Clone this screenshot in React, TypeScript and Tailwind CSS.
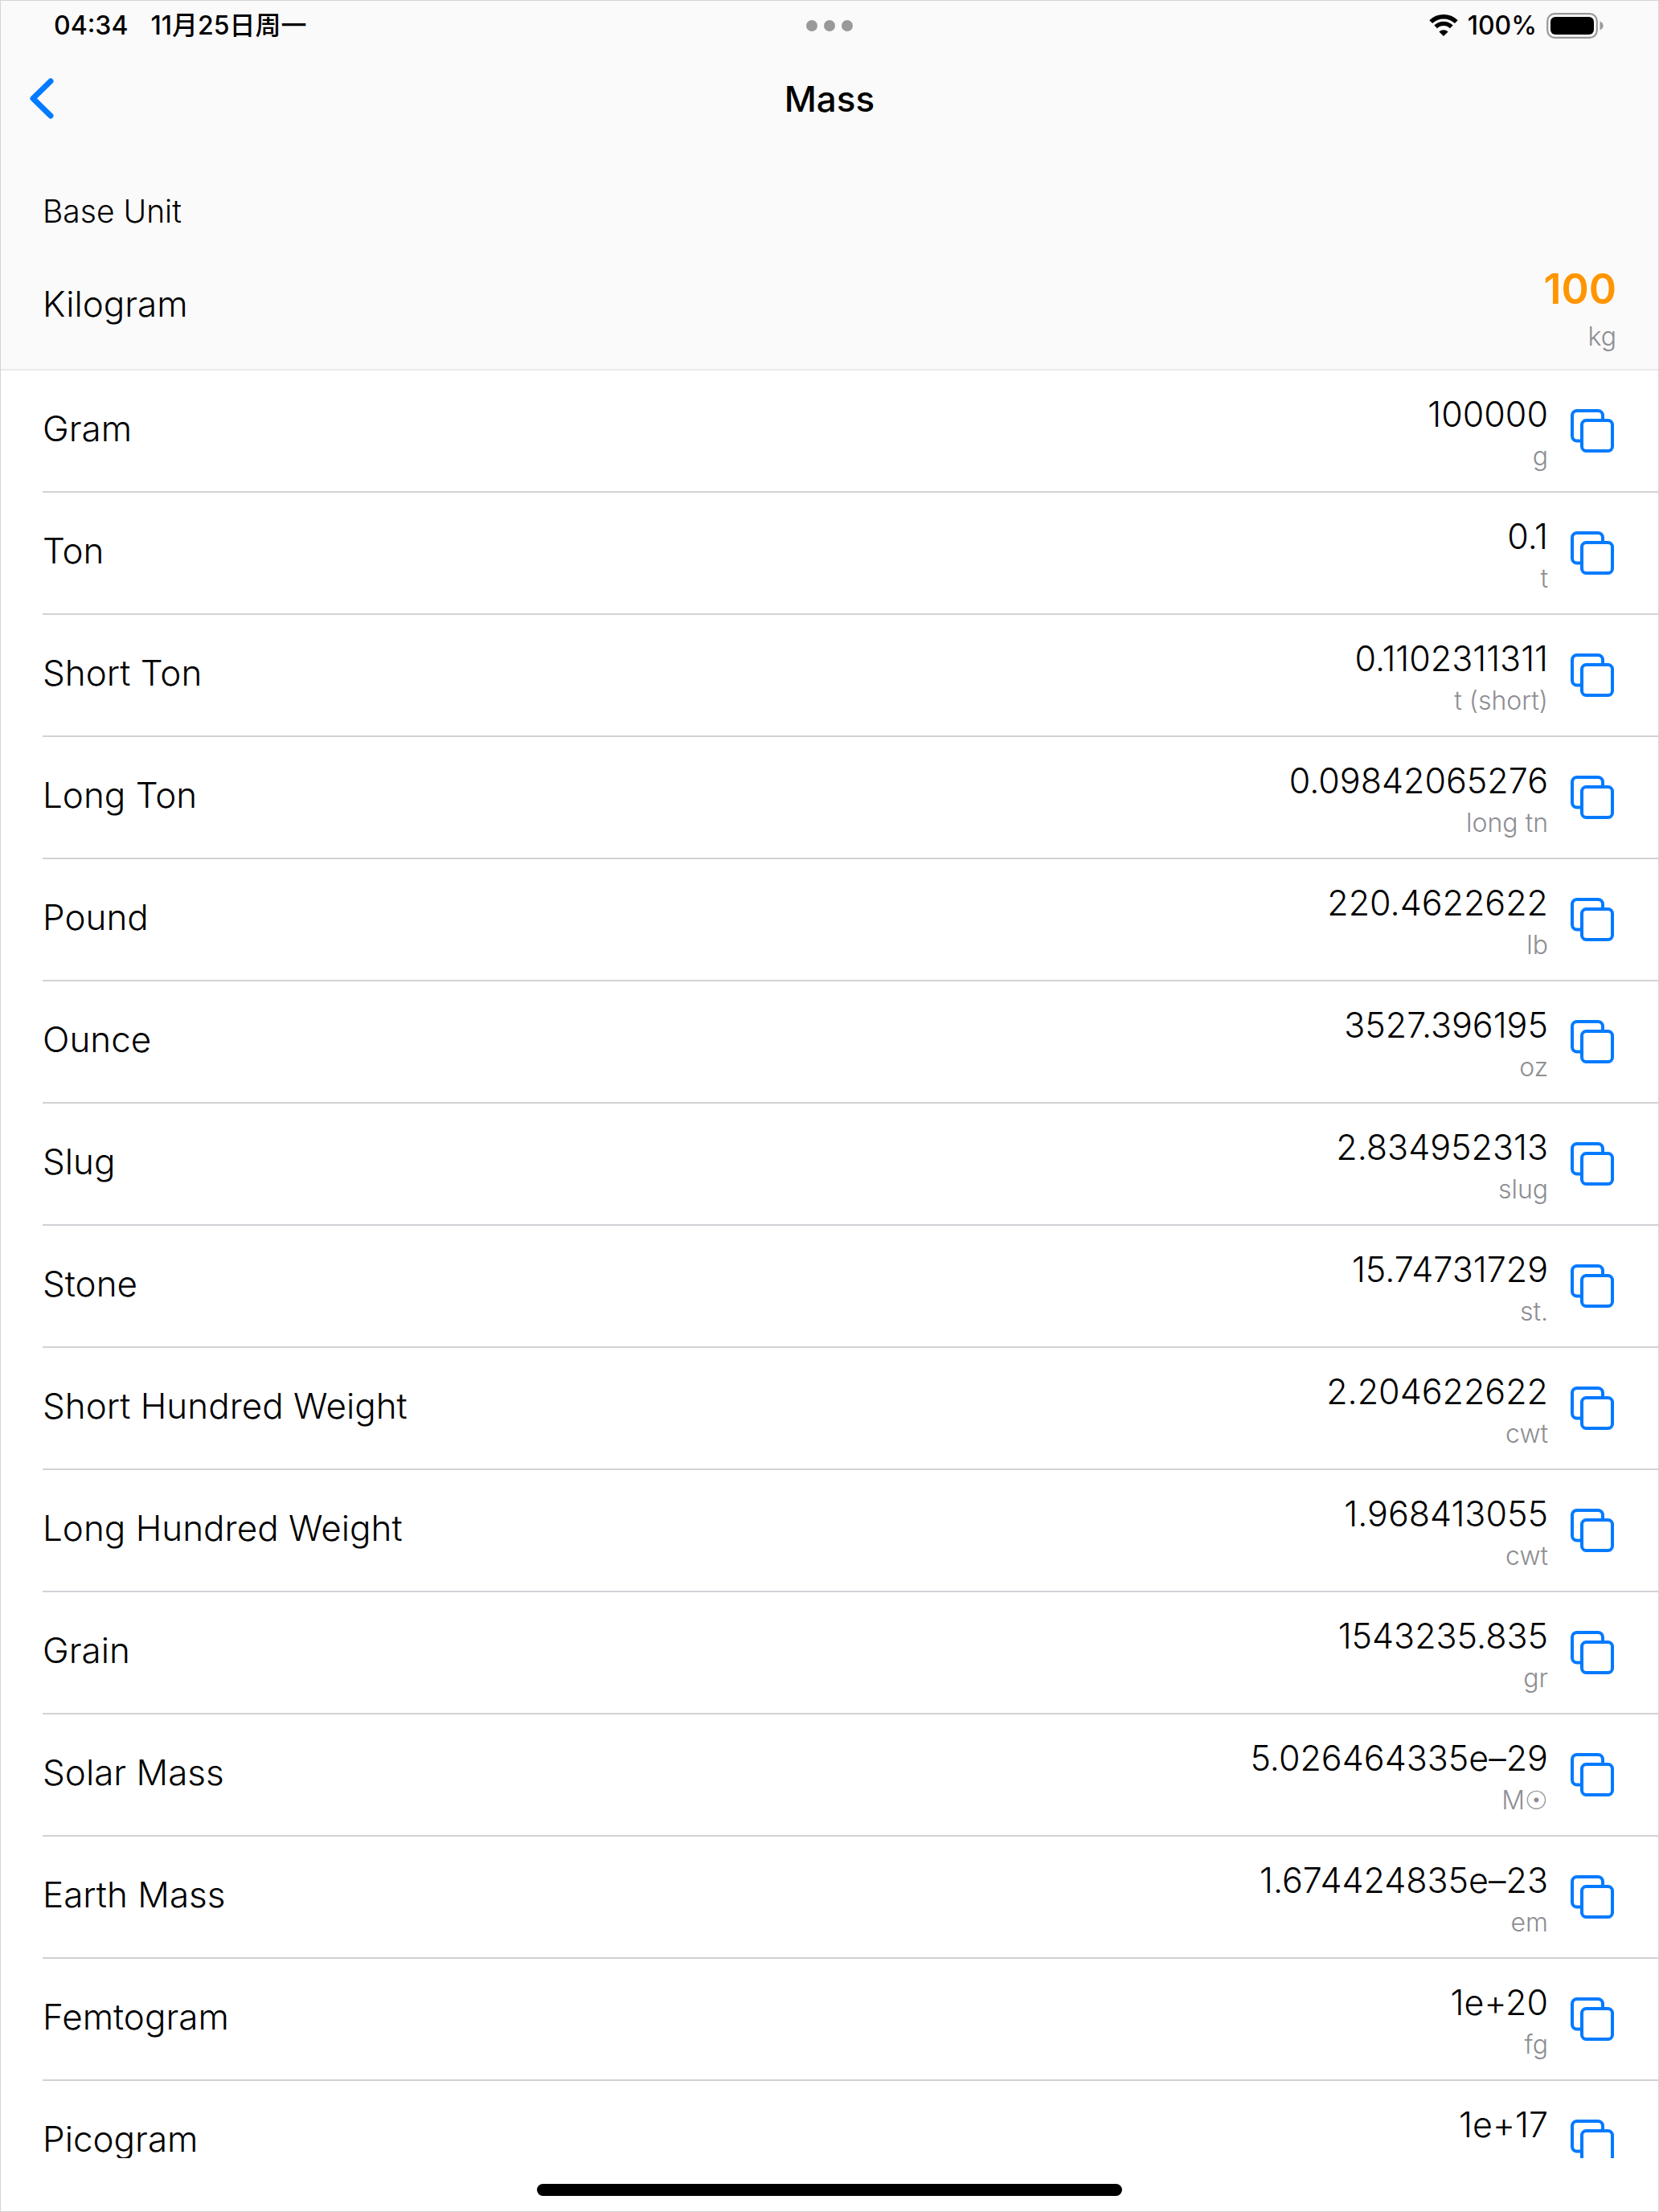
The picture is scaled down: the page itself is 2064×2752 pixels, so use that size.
import React from "react";

type Unit = { name: string; value: string; unit: string };

const units: Unit[] = [
  { name: "Gram", value: "100000", unit: "g" },
  { name: "Ton", value: "0.1", unit: "t" },
  { name: "Short Ton", value: "0.1102311311", unit: "t (short)" },
  { name: "Long Ton", value: "0.09842065276", unit: "long tn" },
  { name: "Pound", value: "220.4622622", unit: "lb" },
  { name: "Ounce", value: "3527.396195", unit: "oz" },
  { name: "Slug", value: "2.834952313", unit: "slug" },
  { name: "Stone", value: "15.74731729", unit: "st." },
  { name: "Short Hundred Weight", value: "2.204622622", unit: "cwt" },
  { name: "Long Hundred Weight", value: "1.968413055", unit: "cwt" },
  { name: "Grain", value: "1543235.835", unit: "gr" },
  { name: "Solar Mass", value: "5.026464335e–29", unit: "M☉" },
  { name: "Earth Mass", value: "1.674424835e–23", unit: "em" },
  { name: "Femtogram", value: "1e+20", unit: "fg" },
  { name: "Picogram", value: "1e+17", unit: "pg" },
];

function WifiIcon() {
  return (
    <svg width="36" height="28" viewBox="0 0 36 28" fill="none" aria-hidden="true">
      <path d="M2.2 9.2 A22.5 22.5 0 0 1 33.8 9.2" stroke="#000" strokeWidth="5.4" />
      <path d="M8.2 15.4 A14 14 0 0 1 27.8 15.4" stroke="#000" strokeWidth="5.4" />
      <path d="M12.4 21.4 A8.4 8.4 0 0 1 23.6 21.4 L18 27 Z" fill="#000" />
    </svg>
  );
}

function BatteryIcon() {
  return (
    <svg width="72" height="32" viewBox="0 0 72 32" fill="none" aria-hidden="true">
      <rect x="1.2" y="1.2" width="61.6" height="29.6" rx="9" stroke="#999" strokeWidth="2.2" />
      <rect x="5" y="5" width="54" height="22" rx="6" fill="#000" />
      <path d="M66.5 10.5 C69 11.5 70.6 13.5 70.6 16 C70.6 18.5 69 20.5 66.5 21.5 Z" fill="#999" />
    </svg>
  );
}

function CopyIcon() {
  return (
    <svg width="54" height="54" viewBox="0 0 54 54" fill="none" stroke="#007aff" strokeWidth="4" aria-hidden="true">
      <path d="M13 39.5 H8 A6 6 0 0 1 2 33.5 V8 A6 6 0 0 1 8 2 H34 A6 6 0 0 1 40 8 V13" />
      <rect x="14" y="14" width="38" height="38" rx="5.5" />
    </svg>
  );
}

function UnitRow({ name, value, unit }: Unit) {
  return (
    <li className="ml-[52px] flex h-[152px] items-center justify-between border-b-2 border-[#d1d1d6] pr-[55px]">
      <span className="pb-1.5 text-[44px] leading-[56px]">{name}</span>
      <div className="flex items-center gap-7">
        <div className="flex flex-col items-end pt-1.5">
          <span className="text-[43px] leading-[58px]">{value}</span>
          <span className="h-12 text-[32px] leading-[48px] text-[#8e8e93]">
            {unit.replace("☉", "")}
            {unit.includes("☉") && <span className="font-['DejaVu_Sans',sans-serif]">☉</span>}
          </span>
        </div>
        <button type="button" aria-label={"Copy " + name}>
          <CopyIcon />
        </button>
      </div>
    </li>
  );
}

export default function App() {
  return (
    <div className="flex h-screen flex-col overflow-hidden border border-[#d4d4d4] bg-white font-['Inter','Noto_Sans_CJK_SC','DejaVu_Sans',sans-serif] font-light text-black">
      <header className="border-b-2 border-[#e9e9e9] bg-[#fafafa]">
        <div className="grid h-16 grid-cols-3 items-center pr-[67px] pb-0.5 pl-[66px] text-[32px] leading-10 font-medium">
          <div className="flex gap-7">
            <time>04:34</time>
            <span>11月25日周一</span>
          </div>
          <div className="flex justify-center gap-2">
            <span className="size-3.5 rounded-full bg-[#999]" />
            <span className="size-3.5 rounded-full bg-[#999]" />
            <span className="size-3.5 rounded-full bg-[#999]" />
          </div>
          <div className="flex items-center justify-end gap-3">
            <WifiIcon />
            <span>100%</span>
            <BatteryIcon />
          </div>
        </div>
        <nav className="grid h-[116px] grid-cols-3 items-center px-[34px]">
          <button type="button" aria-label="Back" className="justify-self-start">
            <svg width="32" height="52" viewBox="0 0 32 52" fill="none" stroke="#007aff" strokeWidth="7" strokeLinecap="round" strokeLinejoin="round" aria-hidden="true">
              <path d="M28 4 L6 25.500 L28 47" />
            </svg>
          </button>
          <h1 className="text-center text-[44px] leading-[56px] font-medium">Mass</h1>
        </nav>
        <section className="pr-[52px] pl-[52px]">
          <h2 className="pt-[58px] text-[39px] leading-[48px]">Base Unit</h2>
          <div className="flex h-[172px] items-center justify-between pt-3.5">
            <label htmlFor="base-value" className="pb-1 text-[44px] leading-[56px]">
              Kilogram
            </label>
            <div className="flex flex-col items-end pt-2">
              <input
                id="base-value"
                type="text"
                inputMode="decimal"
                defaultValue="100"
                className="h-[70px] w-96 bg-transparent text-right text-[52px] leading-[70px] font-semibold text-[#ff9500] outline-none"
              />
              <span className="text-[32px] leading-[48px] text-[#8e8e93]">kg</span>
            </div>
          </div>
        </section>
      </header>
      <ul className="min-h-0 flex-1 overflow-hidden">
        {units.map((u) => (
          <UnitRow key={u.name} name={u.name} value={u.value} unit={u.unit} />
        ))}
      </ul>
      <footer className="flex h-[66px] shrink-0 justify-center pt-8">
        <div className="h-[15px] w-[728px] rounded-full bg-black" />
      </footer>
    </div>
  );
}
